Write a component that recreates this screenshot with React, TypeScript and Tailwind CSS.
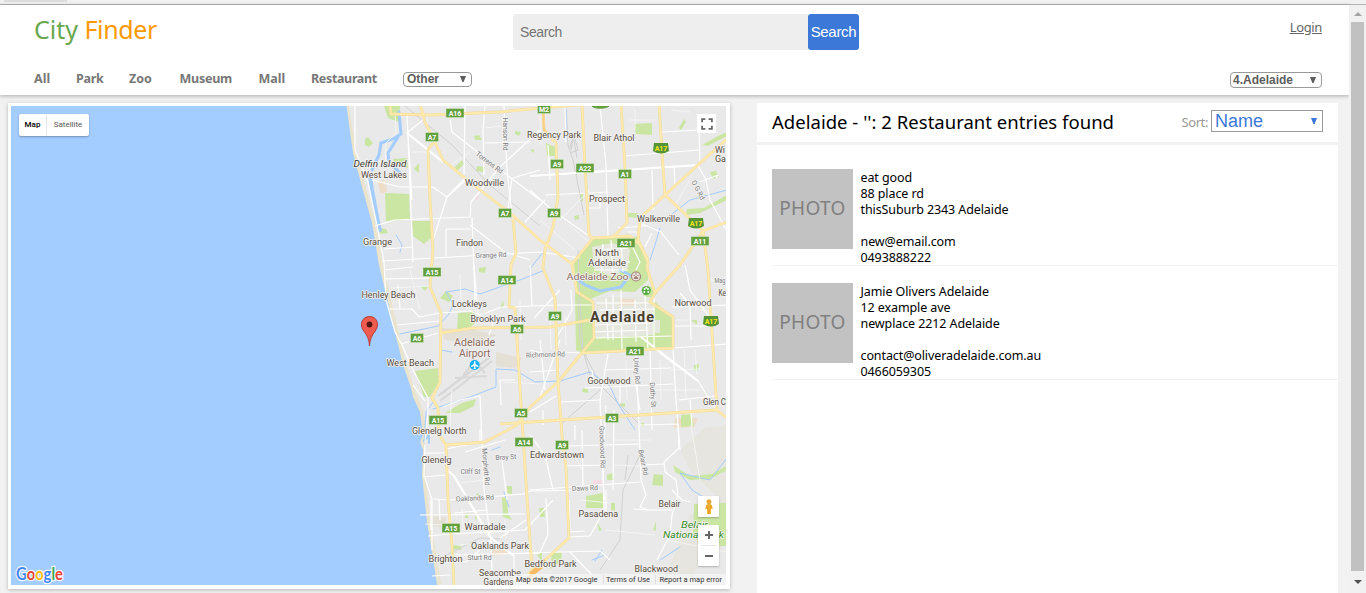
import React from "react";

type Label = [text: string, x: number, y: number, width: number, size?: number];

const YELLOW_ROADS = [
  "M390 104L391 114L430 115L500 112L540 108L590 104",
  "M420 104L425 122L433 138L443 160L465 178L480 190L510 213L540 240L572 264",
  "M433 143L428 150L430 200L433 250L430 287L441 313L440 382L432 398L438 408L439 435L446 445L448 500L452 545L454 586",
  "M513 219L516 253L511 265L509 307L515 308L520 388L523 435L527 498L532 568L530 586",
  "M440 333L473 328L550 327L590 320",
  "M543 104L544 130L556 143L558 197L553 227L545 250L543 268L555 298L558 382L562 435L566 468L569 538L545 560L528 574",
  "M582 104L585 167L589 235L593 238L572 264L577 292L593 302L594 338L558 382L530 407L517 425L485 442L446 445",
  "M621 104L625 167L627 223L613 237",
  "M593 238L630 236L640 245L648 262L647 268L655 293",
  "M659 104L663 167L665 195L640 218L638 240L648 260",
  "M665 195L700 163L727 139",
  "M665 195L703 231L727 222M703 231L708 270L717 410L727 418",
  "M703 231L680 265L655 293L650 302L673 317L673 348L583 353",
  "M500 424L530 422L717 410",
];

const WHITE_ROADS = [
  "M355 106L355 150L368 182L377 225L384 262L386 300L395 332L402 345L413 370L428 398L428 412L425 442",
  "M407 115L409 160L411 210L413 262M423 120L407 133L443 162M408 135L412 200",
  "M375 226L394 220L470 217L471 202L500 167L540 130M433 240L447 197L465 178",
  "M372 180L400 187L433 187L447 197L466 180M465 106L464 175M485 106L483 130L484 175",
  "M448 106L452 132L507 175L540 200M504 106L507 170L512 215M513 178L540 170",
  "M512 178L508 208M525 222L545 200M472 217L475 300M470 225L505 252L530 260",
  "M382 261L434 258L540 252L580 258M384 270L413 267M384 249L413 247",
  "M446 229L470 229M446 229L446 256M503 118L503 150M485 143L530 142",
  "M530 176L600 172L699 165M530 135L550 135M600 106L606 165L608 237M565 106L566 142M545 195L608 192",
  "M530 190L552 210L592 238M548 145L550 180M623 156L700 150M652 170L653 210M674 167L675 185",
  "M697 164L706 180L710 200L727 231M662 132L699 130L700 163M716 178L718 175L700 182",
  "M640 223L661 232L679 255M618 228L645 226M628 232L640 232M652 233L645 247M600 195L600 208L588 208",
  "M384 279L430 278M388 309L412 309L419 317L440 313L470 311L480 315L502 307L560 305L594 305",
  "M397 325L440 321M401 344L438 333M398 285L400 309M474 265L478 315M530 265L532 305M495 317L489 335",
  "M540 340L545 390M500 380L515 380M500 380L501 405M443 407L460 400L480 396L482 442L484 490L491 541L492 570",
  "M530 350L557 357M560 340L540 397M534 318L560 290M558 352L583 353M543 410L543 425",
  "M571 290L572 310L557 337M596 303L655 303M600 310L655 309M596 318L650 315M592 325L651 323M594 332L649 330M596 338L672 336",
  "M606 298L608 340M621 290L622 350M635 300L636 342M645 296L648 350M613 295L613 340M654 292L654 350",
  "M641 337L665 357L698 381L717 411M673 348L676 400L680 450M608 354L600 400L604 500",
  "M636 351L639 425L641 480L646 495L640 507L648 510L633 509M650 350L652 430M585 388L673 384",
  "M673 348L727 344M690 305L691 340M672 307L727 305M674 326L712 326M680 293L690 305M685 265L690 290L710 318",
  "M606 405L603 460L604 510L590 536L569 537M530 490L640 482M568 446L640 444M564 466L603 465",
  "M640 425L678 424L679 448L664 462L665 472L676 480L678 495L672 515L670 535L657 560M645 510L672 510",
  "M679 400L715 396M711 280L727 280M664 464L640 465M672 490L682 500L691 502M606 490L606 511",
  "M413 385L425 401M425 445L424 475L432 500L432 550M425 453L445 453M433 499L450 500L523 494L530 491L600 490",
  "M446 469L454 476L490 537L514 556L514 584M423 477L446 475M431 500L431 530M439 500L440 520",
  "M428 536L450 534L525 530L553 500M450 555L540 553M432 576L450 575M500 538L526 520M502 460L507 500",
  "M465 452L505 440M437 562L466 562L491 540M420 515L525 514M454 513L488 510M525 553L600 551L610 560",
  "M570 552L592 575M569 532L585 531M480 429L480 442M446 449L486 441M553 490L545 455L530 435",
  "M546 498L548 535L540 552M569 500L570 530M582 430L583 485M614 410L613 490M620 380L620 402M690 400L692 426",
  "M530 372L560 370M556 396L530 412M560 402L600 400M604 370L671 368M635 380L640 410M592 370L594 384M575 425L575 440",
  "M597 250L628 248M592 262L630 262M594 270L628 270M603 244L601 278M611 240L613 276M621 244L623 272M632 246L640 262L636 270",
];

const MINOR = "M395 112L396 133L386 143L385 185M413 152L432 152M427 115L428 142M451 165L470 152M486 128L500 126M540 116L541 145M520 300L521 340M460 274L461 300M410 270L420 310M390 288L430 286M452 390L450 425M503 382L540 384M550 310L551 350M565 315L566 345M567 420L600 418M614 440L650 440M691 425L700 480M667 540L727 552M671 370L700 369M684 350L686 400M695 350L697 375M626 360L627 400M660 360L661 400M676 320L690 320M700 310L714 312M540 220L575 250M560 220L590 190M569 225L590 243M675 205L690 180M630 120L655 120M635 110L635 130M671 110L690 112M580 500L610 503M606 530L655 535M460 483L484 480M462 508L463 530M505 520L506 538M444 525L425 524M459 545L486 542M575 456L582 470M615 465L640 466M655 390L700 390";

const PARKS = [
  "M385 193L409 194L410 220L386 221Z", "M393 159L407 158L408 168L394 166Z", "M365 139L368 137L373 143L369 147L365 145Z",
  "M412 221L432 221L431 238L424 244L413 236Z", "M379 228L386 229L388 233L380 234Z", "M474 136L479 135L482 140L475 140Z",
  "M455 167L462 160L464 164L456 172Z", "M477 166L485 167L483 172L476 171Z", "M414 169L419 163L419 173Z", "M515 131L521 132L519 136L515 134Z",
  "M530 150L534 149L534 153Z", "M546 143L555 147L555 156L547 156Z", "M634 124L652 123L652 135L636 134Z",
  "M384 106L400 106L399 122L388 118Z", "M574 262L594 239L615 238L637 237L648 260L648 280L635 292L610 291L588 300L576 292Z",
  "M575 292L592 301L594 337L583 353L576 350Z", "M583 352L594 338L653 335L653 300L672 317L673 348Z",
  "M648 285L658 292L652 300L643 295Z", "M628 213L638 213L639 218L628 217Z", "M687 209L704 208L727 195L727 200L700 213L686 215Z",
  "M710 172L716 171L719 177L713 179Z", "M702 145L720 135L727 132L727 136L708 146Z", "M458 313L474 312L475 323L467 330L457 330Z",
  "M415 371L438 368L439 382L430 397L424 397Z", "M445 413L462 403L476 399L474 406L460 413Z", "M446 291L453 296L449 302L440 298Z",
  "M479 268L486 267L485 273L479 272Z", "M420 286L428 287L425 291Z", "M502 497L507 498L508 513L512 520L503 517Z",
  "M507 486L512 486L512 494L507 493Z", "M451 545L461 546L461 550L451 549Z", "M586 496L603 493L604 508L586 508Z",
  "M607 475L613 473L614 480L607 480Z", "M654 474L663 475L663 486L652 485Z", "M611 503L615 503L615 511L611 510Z",
  "M539 508L544 508L545 517L540 517Z", "M694 504L727 503L727 546L702 546L693 535Z", "M681 415L691 414L694 426L681 427Z",
  "M673 465L690 476L712 474L727 466L727 470L710 479L690 480L675 472Z", "M694 365L699 364L698 371L694 370Z",
  "M583 388L588 389L588 393L582 392Z", "M620 404L625 403L625 407L620 406Z", "M641 423L644 423L644 426L641 426Z",
  "M503 300L504 306L500 309Z", "M476 511L479 515L475 521Z", "M465 514L468 513L468 518L465 518Z", "M476 494L479 493L479 497Z",
  "M552 553L562 552L561 562L550 569Z", "M574 216L579 215L579 219L575 220Z", "M653 530L656 521L656 531Z", "M597 522L602 530L599 531Z",
  "M580 194L583 194L583 201L580 201Z", "M691 320L697 320L697 325Z", "M679 128L684 119L686 122L681 130Z", "M542 552L537 555L542 562Z",
];

const WATER_LINES = [
  "M399 112L401 134L393 139L381 143L379 155L372 170M398 137L388 153L389 162L400 173L389 177",
  "M400 334L438 326L449 314L453 304L446 292L465 289L480 294L505 285L520 280L545 270",
  "M433 409L470 397L496 387L496 369L515 370L535 382L560 381L590 372L610 386L617 402L635 430",
  "M573 276L585 285L600 291L621 287L630 275L620 270", "M660 228L655 245L650 260", "M667 218L690 200L727 190",
  "M708 500L692 490L680 473L710 480L727 458", "M529 270L545 250M566 110L566 140M592 560L605 555M492 450L500 447",
  "M396 235L402 245L400 252M424 442L426 412L434 401", "M504 492L509 507M452 352L440 350M595 561L602 550M660 560L680 547",
];

const SHIELDS: [string, number, number][] = [
  ["A16", 455, 113], ["M2", 544, 109], ["A7", 432, 137], ["A9", 557, 164], ["A22", 585, 168], ["A1", 625, 174],
  ["A7", 505, 213], ["A9", 554, 213], ["A11", 700, 241], ["A21", 626, 243], ["A15", 432, 272], ["A14", 507, 280],
  ["A6", 417, 338], ["A6", 517, 329], ["A9", 555, 316], ["A21", 635, 351], ["A15", 438, 420], ["A5", 521, 413],
  ["A3", 612, 418], ["A14", 524, 442], ["A9", 562, 445], ["A15", 451, 528],
];

const ROUND_SHIELDS: [string, number, number][] = [["A17", 661, 148], ["A17", 696, 223], ["A17", 711, 321]];

const PLACES: Label[] = [
  ["West Lakes", 361, 178, 46], ["Woodville", 465, 186, 39], ["Regency Park", 527, 138, 54], ["Blair Athol", 593.5, 141, 41],
  ["Prospect", 589, 202, 36], ["Walkerville", 637, 222, 43], ["Grange", 363, 245, 29], ["Findon", 456, 246, 27],
  ["North", 595, 256, 24], ["Adelaide", 588, 265.5, 38], ["Henley Beach", 361.5, 298, 54], ["Lockleys", 452, 307, 35],
  ["Brooklyn Park", 470.5, 322, 55], ["West Beach", 386.5, 366, 47.5], ["Norwood", 674.5, 306, 37], ["Goodwood", 587.5, 383.5, 43],
  ["Glenelg North", 412, 434, 54.5], ["Glenelg", 421.5, 463, 30], ["Edwardstown", 530, 458, 54], ["Warradale", 464.5, 530, 41],
  ["Oaklands Park", 471, 548.5, 58], ["Brighton", 428.5, 562, 34], ["Seacombe", 479, 576, 42], ["Gardens", 483.5, 584.5, 30],
  ["Bedford Park", 524.5, 567, 52], ["Pasadena", 578.5, 517, 39.5], ["Belair", 658.5, 506.5, 22], ["Blackwood", 634.5, 571.5, 43.5],
  ["Wi", 715, 152.5, 10], ["Ga", 715, 161.5, 11], ["Ke", 718.5, 295.5, 7.5], ["Glen C", 703, 404.5, 23],
];

const STREETS: [string, number, number, number, number][] = [
  ["Grange Rd", 491, 257.5, 31, -2], ["Richmond Rd", 545.5, 357, 39, -2], ["Bray St", 506, 459.5, 21, -3],
  ["Cliff St", 470.5, 473.5, 20, 0], ["Oaklands Rd", 475, 500.5, 38, -3], ["Daws Rd", 585, 490.5, 26, -2],
  ["Sturt Rd", 479.5, 560, 24, 0], ["Mag", 720, 283, 11, 0], ["Torrens Rd", 488, 164.5, 32, 37],
  ["Hanson Rd", 503, 134, 33, 90], ["Unley Rd", 634.5, 371, 26, 86], ["Duthy St", 650.5, 395, 25, 86],
  ["Goodwood Rd", 600, 447, 42, 88], ["Morphett Rd", 483.5, 467, 37, 85], ["Belair Rd", 641, 463, 26, 78], ["O G Rd", 696, 191, 21, 63],
];

function CityMap() {
  return (
    <svg viewBox="11 106 715 479" className="block h-[479px] w-[715px]" fontFamily="Roboto, sans-serif">
      <rect x="11" y="106" width="715" height="479" fill="#e9e9e9" />
      <path d="M689 586L702 555L727 545L727 425L705 428L680 450L690 470L720 500L690 515L662 586Z" fill="#e6e5df" />
      <path d="M675 418L698 418L694 427L674 428Z M378 181L386 180L387 192L380 193Z M620 299L634 299L634 305L620 305Z M491 549L505 549L510 554L492 556Z" fill="#eeddc9" />
      <path d="M593 480L603 480L603 485L593 485Z M474 197L479 195L477 201Z" fill="#f3dce3" />
      <path d="M496 352L522 358L516 368L496 366Z M440 328L470 329L497 335L480 342L445 340Z M426 515L446 517L445 528L427 525Z" fill="#e5e0d5" />
      {PARKS.map((d) => <path key={d} d={d} fill="#cbe6a3" />)}
      <path d="M592 247L612 243L630 249L628 268L612 277L594 268Z M596 297L652 297L652 335L596 337Z M654 320L660 320L660 333L654 333Z" fill="#e6e8e0" />
      <path d="M619 299L634 299L634 305L619 305Z" fill="#eeddc9" />
      <path d="M438 396L490 357M440 401L492 361M455 378L487 376M467 352L485 373M463 376L475 360" stroke="#d8d8d8" strokeWidth="2.200" fill="none" />
      <path d="M405 106L452 145L490 185L540 226M578 250L580 300L583 350L600 385L640 425M566 106L568 145L573 160L584 215M578 300L580 340L590 375M560 425L600 390M570 153L578 150L574 135L571 150M570 148L573 135L577 158M625 480L628 455M640 455L623 490L620 540L600 570M447 555L480 538L500 539" stroke="#d1d1d1" strokeWidth="1" fill="none" />
      <path d="M345 104L353 153L362 187L372 223L380 268L388 302L395 332L403 365L412 392L420 412L423 435L421 442L422 475L427 522L433 558L438 587" fill="none" stroke="#eae4cd" strokeWidth="7" />
      <path d="M11 106H346.500L353 153L362 187L372 223L379 265L388 302L395 332L403 365L411 388L413 397L420 412L423 435L420 442L423 450L422 475L427 522L433 558L437 585H11Z" fill="#a3ccff" />
      <g fill="none" stroke="#a3ccff" strokeLinecap="round">
        {WATER_LINES.map((d, i) => <path key={d} d={d} strokeWidth={i === 0 || i === 3 ? 3 : 1} />)}
        <path d="M370 176L372 190L378 222L380 230" strokeWidth="4" />
        <path d="M424 441L429 435L429 443" strokeWidth="2" />
      </g>
      <path d={MINOR} stroke="#f7f7f7" strokeWidth="0.800" fill="none" />
      <g fill="none" stroke="#ffffff" strokeLinejoin="round">
        {WHITE_ROADS.map((d) => <path key={d} d={d} strokeWidth="1.200" />)}
        <path d="M407 133L443 162M446 469L454 476L490 537L514 556M641 337L698 381M530 176L699 165" strokeWidth="2.200" />
      </g>
      <g fill="none" strokeLinejoin="round">
        {YELLOW_ROADS.map((d) => <path key={d} d={d} stroke="#f5da98" strokeWidth="2.800" />)}
        {YELLOW_ROADS.map((d) => <path key={d} d={d} stroke="#feeaac" strokeWidth="1.900" />)}
        <path d="M543 106L544 130L552 138" stroke="#f9cf85" strokeWidth="2" />
        <path d="M530 574L545 560M527 579L542 567" stroke="#f8ba62" strokeWidth="2.500" />
      </g>

      {SHIELDS.map(([t, x, y]) => (
        <g key={t + x}>
          <rect x={x - (t.length > 2 ? 9 : 6.5)} y={y - 4.5} width={t.length > 2 ? 18 : 13} height="9" fill="#62a03f" stroke="#d7e9c8" strokeWidth="0.500" />
          <text x={x} y={y + 2.6} fontSize="7" fontWeight="700" fill="#ffffff" textAnchor="middle">{t}</text>
        </g>
      ))}
      <path d="M592 106C594 109 606 109 609 106Z" fill="#62a03f" stroke="#62a03f" />
      {ROUND_SHIELDS.map(([t, x, y]) => (
        <g key={t + x}>
          <path d={`M${x - 7} ${y - 5}H${x + 7}L${x + 8} ${y + 3}Q${x} ${y + 8} ${x - 8} ${y + 3}Z`} fill="#549336" />
          <text x={x} y={y + 2.6} fontSize="7" fontWeight="700" fill="#ffe51f" textAnchor="middle">{t}</text>
        </g>
      ))}

      <g stroke="#f3f3f3" strokeWidth="1.600" paintOrder="stroke" strokeLinejoin="round">
        {STREETS.map(([t, x, y, w, r]) => (
          <text key={t} x={x} y={y} fontSize="7" fill="#7b7b7b" textAnchor="middle" textLength={w} lengthAdjust="spacingAndGlyphs" transform={`rotate(${r} ${x} ${y})`}>{t}</text>
        ))}
        {PLACES.map(([t, x, y, w]) => (
          <text key={t + y} x={x} y={y} fontSize="9" fill="#574b3d" textLength={w} lengthAdjust="spacingAndGlyphs">{t}</text>
        ))}
        <text x="353.500" y="167" fontSize="9" fontStyle="italic" fill="#403a32" textLength="53" lengthAdjust="spacingAndGlyphs">Delfin Island</text>
        <text x="566.500" y="279.500" fontSize="9.800" fill="#8d6b5e" textLength="62" lengthAdjust="spacingAndGlyphs">Adelaide Zoo</text>
        <text x="454" y="346" fontSize="10" fill="#8d6b5e" textLength="41" lengthAdjust="spacingAndGlyphs">Adelaide</text>
        <text x="459" y="356.500" fontSize="10" fill="#8d6b5e" textLength="31.500" lengthAdjust="spacingAndGlyphs">Airport</text>
        <text x="590" y="322" fontSize="14.500" fontWeight="700" fill="#493f2d" textLength="64" lengthAdjust="spacing">Adelaide</text>
        <g fill="#398c26" fontStyle="italic" fontSize="9.500">
          <text x="681" y="527.500" textLength="27" lengthAdjust="spacingAndGlyphs">Belair</text>
          <text x="663" y="538" textLength="61" lengthAdjust="spacingAndGlyphs">National Park</text>
        </g>
      </g>

      <circle cx="636" cy="276.500" r="4.500" fill="#efe5e1" stroke="#a18076" strokeWidth="1.200" />
      <path d="M634 278.500Q636 274.500 638 278.500ZM633.500 275.500H635M635 274H637M637.300 275.500H638.800" fill="#a18076" stroke="#a18076" strokeWidth="1" />
      <circle cx="646.300" cy="290.500" r="4.500" fill="#59ad45" />
      <g fill="#fff"><circle cx="644.600" cy="289" r="1" /><circle cx="648" cy="289" r="1" /><circle cx="644.300" cy="292" r="1" /><circle cx="648.300" cy="292" r="1" /><circle cx="646.300" cy="287.800" r="1" /></g>
      <circle cx="474.700" cy="365" r="5" fill="#12b0f5" />
      <path d="M474 361.500Q474.700 360.500 475.400 361.500L475.600 364L478.500 366V367L475.500 366.200L475.300 368L476.200 369H473.200L474.100 368L473.900 366.200L471 367V366L473.800 364Z" fill="#fff" />
      <path d="M369.500 346Q369 337 364 331.500C358.500 324 362.500 316.500 369.500 316.500S380.500 324 375 331.500Q370 337 369.500 346Z" fill="#f05b4f" stroke="#b5382f" strokeWidth="0.900" />
      <circle cx="369.500" cy="324.500" r="2.900" fill="#531512" />

      <text x="16" y="580" stroke="#f5f8ff" strokeWidth="2.500" paintOrder="stroke" fontSize="16.500" fontFamily="Lato, sans-serif" fontWeight="700" textLength="47" lengthAdjust="spacingAndGlyphs">
        <tspan fill="#4285f4">G</tspan><tspan fill="#ea4335">o</tspan><tspan fill="#fbbc05">o</tspan><tspan fill="#4285f4">g</tspan><tspan fill="#34a853">l</tspan><tspan fill="#ea4335">e</tspan>
      </text>

      <rect x="514" y="574" width="212" height="11" fill="#f5f5f5" opacity="0.750" />
      <path d="M603.500 575V584M655.500 575V584" stroke="#d5d5d5" strokeWidth="0.700" />
      <g fontSize="7.500" fill="#333333">
        <text x="516" y="582" textLength="81.500" lengthAdjust="spacingAndGlyphs">Map data ©2017 Google</text>
        <text x="606" y="582" textLength="44" lengthAdjust="spacingAndGlyphs">Terms of Use</text>
        <text x="659.500" y="582" textLength="62.500" lengthAdjust="spacingAndGlyphs">Report a map error</text>
      </g>
    </svg>
  );
}

function Caret({ className }: { className: string }) {
  return <svg viewBox="0 0 6 6" className={className}><path d="M0 0H6L3.600 6H2.400Z" fill="currentColor" /></svg>;
}

function MapPanel() {
  return (
    <section className="relative mt-[7px] ml-2 h-[486px] w-[722px] shrink-0 bg-white p-[3px] shadow-[0_1px_4px_rgba(0,0,0,0.25)]">
      <CityMap />
      <div className="absolute top-[11px] left-[11px] flex h-[22px] w-[70px] rounded-[2px] bg-white text-[8px] leading-[22px] shadow-[0_1px_2px_rgba(0,0,0,0.3)] [font-family:Roboto,sans-serif]">
        <button className="w-[28px] border-r border-gray-200 font-medium text-black">Map</button>
        <button className="flex-1 text-[#565656]">Satellite</button>
      </div>
      <button className="absolute top-[11px] left-[689px] flex size-[19px] items-center justify-center bg-white">
        <svg viewBox="0 0 11 11" className="size-[12px]"><path d="M1 4V1H4M7 1H10V4M10 7V10H7M4 10H1V7" fill="none" stroke="#666" strokeWidth="1.600" /></svg>
      </button>
      <button className="absolute top-[393px] left-[690px] flex h-[21px] w-[21px] items-center justify-center rounded-[1px] bg-white shadow-[0_1px_2px_rgba(0,0,0,0.25)]">
        <svg viewBox="0 0 10 16" className="h-4 w-[10px]">
          <path d="M2.500 5.500Q5 4.500 7.500 5.500L8.800 10L7.800 10.500L7 8.500L6.800 15H3.200L3 8.500L2.200 10.500L1.200 10Z" fill="#f5ad27" />
          <path d="M5 10V15M3 6.500V10M7 6.500V10" stroke="#cf8a1d" strokeWidth="0.700" />
          <circle cx="5" cy="2.800" r="2.100" fill="#f5ad27" stroke="#cc8419" strokeWidth="0.600" />
        </svg>
      </button>
      <div className="absolute top-[422px] left-[690px] flex h-[41px] w-[21px] flex-col items-center rounded-[1px] bg-white shadow-[0_1px_2px_rgba(0,0,0,0.25)]">
        <button className="flex h-5 w-full items-center justify-center"><svg viewBox="0 0 8 8" className="size-2"><path d="M4 0V8M0 4H8" stroke="#666" strokeWidth="2" /></svg></button>
        <span className="h-px w-[15px] bg-[#e6e6e6]" />
        <button className="flex h-5 w-full items-center justify-center"><svg viewBox="0 0 8 8" className="size-2"><path d="M0 4H8" stroke="#666" strokeWidth="2" /></svg></button>
      </div>
    </section>
  );
}

const NAV: [string, string][] = [
  ["All", "w-[42px]"], ["Park", "w-[53px] tracking-[-0.300px]"], ["Zoo", "w-[50.500px]"], ["Museum", "w-[79px] tracking-[-0.250px]"],
  ["Mall", "w-[52.500px]"], ["Restaurant", "w-[92px] tracking-[-0.350px]"],
];

function Header() {
  return (
    <header className="relative z-10 flex h-[90px] flex-col bg-white shadow-[0_1px_4px_rgba(0,0,0,0.3)]">
      <div className="flex h-[52px]">
        <h1 className="ml-[34px] w-[479px] pt-[6px] text-[25px] leading-[36px] text-[#6aa84f]">
          City <span className="tracking-[-0.400px] text-[#ff9900]">Finder</span>
        </h1>
        <form className="mt-[9px] flex h-9 w-[346px] [font-family:'Liberation_Sans',sans-serif]">
          <input placeholder="Search" className="min-w-0 flex-1 rounded-l-[3px] bg-[#eeeeee] px-[7px] text-[14px] tracking-[-0.400px] placeholder:text-[#757575]" />
          <button type="button" className="w-[51px] rounded-[3px] bg-[#3c78d8] text-[15px] tracking-[-0.300px] text-white">Search</button>
        </form>
        <a className="mt-[12px] mr-[27px] ml-auto text-[13px] leading-[20px] tracking-[-0.350px] text-[#666666] underline">Login</a>
      </div>
      <nav className="flex pt-[12px] pl-[34px] text-[12.500px] leading-[20px] font-bold text-[#777777]">
        {NAV.map(([name, width]) => <a key={name} className={`${width} whitespace-nowrap`}>{name}</a>)}
        <button className="mt-[3px] flex h-[15px] w-[69px] items-center justify-between rounded-[4px] border border-[#999] pr-[5px] pl-[3px] text-[12px] leading-[13px] text-[#5e5e5e] [font-family:'Liberation_Sans',sans-serif]">
          Other<Caret className="-mt-px size-[6px]" />
        </button>
        <button className="mt-[3px] mr-[27px] ml-auto flex h-4 w-[92px] items-center justify-between rounded-[4px] border border-[#999] pr-[5px] pl-[2px] text-[12px] leading-[14px] text-[#5e5e5e] [font-family:'Liberation_Sans',sans-serif]">
          4.Adelaide<Caret className="size-[6px]" />
        </button>
      </nav>
    </header>
  );
}

const ENTRIES = [
  ["eat good", "88 place rd", "thisSuburb 2343 Adelaide", "", "new@email.com", "0493888222"],
  ["Jamie Olivers Adelaide", "12 example ave", "newplace 2212 Adelaide", "", "contact@oliveradelaide.com.au", "0466059305"],
];

function Results() {
  return (
    <section className="mt-[7px] ml-[27px] flex w-[581px] shrink-0 flex-col">
      <div className="flex h-[39px] shrink-0 bg-white pl-[15px]">
        <h2 className="pt-[4px] text-[18.500px] leading-[30px] tracking-[0.020px] whitespace-nowrap text-black">Adelaide - '': 2 Restaurant entries found</h2>
        <label className="mt-[9px] mr-[3px] ml-auto text-[13px] leading-[20px] tracking-[-0.400px] text-[#999999]">Sort:</label>
        <button className="mt-[7px] mr-[15px] flex h-[22px] w-[112px] items-center justify-between border border-[#999] pr-[5px] pl-[3px] text-[18px] leading-[20px] text-[#3c78d8] [font-family:'Liberation_Sans',sans-serif]">
          Name<Caret className="size-[6px]" />
        </button>
      </div>
      <div className="mt-[3px] flex-1 bg-white pt-[7px] pl-[15px]">
        {ENTRIES.map((lines) => (
          <article key={lines[0]} className="flex h-[114px] border-b border-[#f0f0f0] pt-[17px]">
            <div className="flex h-[80px] w-[81px] items-center justify-center bg-[#c2c2c2] pb-px text-[19px] tracking-[0.300px] text-[#808080]">PHOTO</div>
            <div className="mt-px ml-[7.500px] text-[12.500px] leading-[16px] tracking-[-0.100px] whitespace-nowrap text-black">
              {lines.map((line, i) => <p key={i} className="h-4">{line}</p>)}
            </div>
          </article>
        ))}
      </div>
    </section>
  );
}

export default function App() {
  return (
    <div className="flex h-[593px] w-[1366px] flex-col overflow-hidden bg-[#f2f2f2] [font-family:'Noto_Sans',sans-serif]">
      <div className="h-[5px] shrink-0 border-b border-[#b3b3b3] bg-[#f1f1f1]"><div className="ml-1 h-[2px] w-[63px] bg-[#dddddd]" /></div>
      <div className="flex min-h-0 flex-1">
        <div className="flex w-[1349px] flex-col">
          <Header />
          <main className="flex min-h-0 flex-1 pt-px">
            <MapPanel />
            <Results />
          </main>
        </div>
        <div className="z-20 flex w-[17px] flex-col items-center bg-[#f1f1f1]">
          <div className="flex h-[17px] items-center text-[#a3a3a3]"><svg viewBox="0 0 8 4" className="h-1 w-2"><path d="M0 4L4 0L8 4Z" fill="currentColor" /></svg></div>
          <div className="h-[549px] w-[13px] bg-[#c1c1c1]" />
          <div className="flex flex-1 items-center text-[#505050]"><svg viewBox="0 0 8 4" className="h-1 w-2"><path d="M0 0L4 4L8 0Z" fill="currentColor" /></svg></div>
        </div>
      </div>
    </div>
  );
}
